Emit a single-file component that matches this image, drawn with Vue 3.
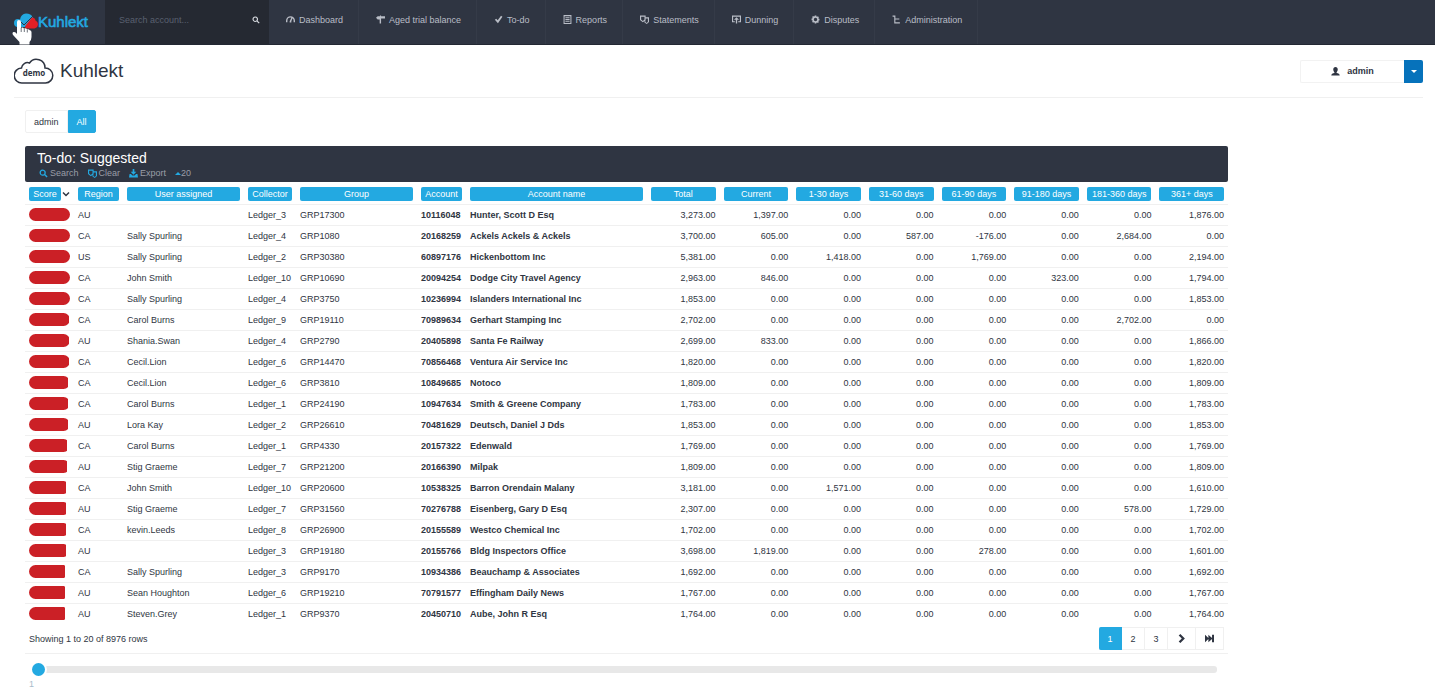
<template>
  <div class="page">
    <!-- 顶部导航 -->
    <header class="topbar">
      <a href="#" class="logo" aria-label="Kuhlekt">
        <svg class="logo-mark" viewBox="0 0 24 18" aria-hidden="true">
          <path d="M4 14a4 4 0 0 1 0-8q1 0 2 .5Q7 1 12 .5q5 0 7 4L11 14z" fill="#23a9e1" />
          <path d="M12 15.500q-1.500-1-.5-3L18 4.500q3 0 3.500 3 2.500 1 2.500 3.500 0 3.500-3.500 4.500z" fill="#e11f26" />
          <path d="M5 7l5 5L19 3" fill="none" stroke="#2f3542" stroke-width="1" />
        </svg>
        <span class="logo-text">Kuhlekt</span>
      </a>
      <form class="account-search" @submit.prevent>
        <input v-model="keyword" type="text" placeholder="Search account..." aria-label="Search account">
        <button type="submit" aria-label="Search">
          <svg class="icon" viewBox="0 0 16 16"><path :d="icons.search" /></svg>
        </button>
      </form>
      <nav class="menu">
        <a v-for="item in menu" :key="item.label" href="#" class="menu-item">
          <svg class="icon" viewBox="0 0 16 16"><path :d="icons[item.icon]" fill-rule="evenodd" /></svg>
          <span>{{ item.label }}</span>
        </a>
      </nav>
      <svg class="pointer" viewBox="0 0 20 25" aria-hidden="true">
        <path d="M5 2q0-2 2-2t2 2v6q1.500-1 3 .5 2-.8 3 .8 2-.6 2.800 1 1.700.2 1.700 2V17q0 3-2 5v2.500H7.500V22L1.500 15.500Q-.5 13 1.500 12 3.500 11.500 5 14z" fill="#fff" />
        <path d="M9.200 8v4M12.300 8.500V12M15.300 9.500v3" fill="none" stroke="#4a505c" stroke-width=".8" />
      </svg>
    </header>

    <!-- 标题与用户 -->
    <section class="heading">
      <svg class="cloud" viewBox="0 0 40 26" aria-hidden="true">
        <path d="M8 25a7.500 7.500 0 0 1-.5-15 6 6 0 0 1 8-5A8.500 8.500 0 0 1 31 10a7.500 7.500 0 0 1 .5 15z" fill="#fff" stroke="#2f3542" stroke-width="1.500" />
        <text x="20" y="18" text-anchor="middle" class="cloud-text">demo</text>
      </svg>
      <h1>Kuhlekt</h1>
      <div class="user">
        <button type="button" class="user-name">
          <svg class="icon" viewBox="0 0 16 16"><path :d="icons.user" /></svg>
          <span>admin</span>
        </button>
        <button type="button" class="user-toggle" aria-label="Open user menu"><i class="caret"></i></button>
      </div>
    </section>

    <main class="content">
      <div class="tabs">
        <button type="button" :class="{ active: tab === 'admin' }" @click="tab = 'admin'">admin</button>
        <button type="button" :class="{ active: tab === 'All' }" @click="tab = 'All'">All</button>
      </div>

      <div class="panel">
        <div class="panel-head">
          <h2>To-do: Suggested</h2>
          <div class="tools">
            <a v-for="tool in tools" :key="tool.label" href="#">
              <svg class="icon" viewBox="0 0 16 16"><path :d="icons[tool.icon]" fill-rule="evenodd" /></svg>
              <span>{{ tool.label }}</span>
            </a>
            <a href="#" class="limit"><i class="caret-up"></i><span>20</span></a>
          </div>
        </div>

        <table>
          <colgroup>
            <col v-for="col in columns" :key="col.title" :class="col.size">
          </colgroup>
          <thead>
            <tr>
              <th v-for="col in columns" :key="col.title" scope="col">
                <div class="th-inner">
                  <button type="button">{{ col.title }}</button>
                  <svg v-if="col.title === 'Score'" class="sort" viewBox="0 0 8 8"><path d="M1 2.500 4 5.500 7 2.500" /></svg>
                </div>
              </th>
            </tr>
          </thead>
          <tbody>
            <tr v-for="row in rows" :key="row[5]">
              <td><div class="score"><div class="score-bar" :style="{ width: row[0] + '%' }"></div></div></td>
              <td v-for="n in 4" :key="n">{{ row[n] }}</td>
              <td class="bold">{{ row[5] }}</td>
              <td class="bold">{{ row[6] }}</td>
              <td v-for="(amount, i) in row[7]" :key="'a' + i" class="num">{{ amount }}</td>
            </tr>
          </tbody>
        </table>

        <div class="table-foot">
          <span>Showing 1 to 20 of 8976 rows</span>
          <div class="pager">
            <button v-for="n in 3" :key="n" type="button" :class="{ active: page === n }" @click="page = n">{{ n }}</button>
            <button type="button" class="wide" aria-label="Next page" @click="page = Math.min(page + 1, 449)">
              <svg class="icon" viewBox="0 0 16 16"><path :d="icons.next" /></svg>
            </button>
            <button type="button" class="wide" aria-label="Last page" @click="page = 449">
              <svg class="icon" viewBox="0 0 16 16"><path :d="icons.last" /></svg>
            </button>
          </div>
        </div>

        <div class="slider">
          <input id="page-slider" v-model.number="page" type="range" min="1" max="449" aria-label="Page">
          <label for="page-slider">{{ page }}</label>
        </div>
      </div>
    </main>
  </div>
</template>

<script setup>
import { ref } from 'vue';

const keyword = ref('');
const tab = ref('All');
const page = ref(1);

// 图标路径
const icons = {
  search: 'M6.500 1a5.500 5.500 0 1 0 3 10.100l4 4 1.800-1.800-4-4A5.500 5.500 0 0 0 6.500 1zm0 2.200a3.300 3.300 0 1 1 0 6.600 3.300 3.300 0 0 1 0-6.600z',
  gauge: 'M8 2a8 8 0 0 0-8 8v3h2.500v-3A5.500 5.500 0 0 1 8 4.500l1.500.2L6.500 11v2.500h3V11l2-5.300A5.500 5.500 0 0 1 13.500 10v3H16v-3a8 8 0 0 0-8-8z',
  sign: 'M0 5l3-3h4V1h2v1h7v4H9v9H6.500V8H3z',
  check: 'M1.500 8.500 4 6.500l2.500 3L12.500 1.500 15 3 7 14.500z',
  list: 'M1 0h14v16H1zM2.800 2v12h10.400V2zM4.300 3.800h7.400v1.900H4.300zM4.300 7h7.400v1.900H4.300zM4.300 10.300h7.400v1.900H4.300z',
  copy: 'M0 1h10v3h6v8.500L12 16l-4-2.500v-3L5 13 0 9zM2 3v5l3 2.500L8 8V3zM10 6v3l-.5.8v2.700L12 14l2-2V6z',
  inbox: 'M0 1h16v12h-5v-2h3V3H2v8h3v2H0zM8 4l4.500 4.500H9.200V15H6.800V8.500H3.500z',
  gear: 'M6.500 1h3v1.500l1.500.7 1.300-1 1.800 1.800-1 1.300.6 1.400H15v3h-1.300l-.6 1.400 1 1.300-1.800 1.800-1.300-1-1.500.7V15h-3v-1.600l-1.500-.6-1.300 1-1.800-1.800 1-1.300-.6-1.400H1v-3h1.300l.6-1.400-1-1.300 1.800-1.800 1.300 1 1.500-.7zM8 5a3 3 0 1 0 0 6 3 3 0 0 0 0-6z',
  tree: 'M1 1h5v2v3h7v2H6v5h8v2H4V3H1z',
  user: 'M8 0c2.500 0 4 1.800 4 4.500 0 2-1 3.800-2 4.700v1.300c3 .7 5.500 1.800 5.500 4.500H.500c0-2.700 2.500-3.800 5.500-4.500V9.200C5 8.300 4 6.500 4 4.500 4 1.800 5.500 0 8 0z',
  download: 'M6.500 0h3v5H13L8 10 3 5h3.500zM1 9h2.500L6 11.500h4L12.500 9H15l1 6H0z',
  next: 'M3 2.500 6 0l8 8-8 8L3 13.500 8.500 8z',
  last: 'M0 1.500 6 7V1.500L12.500 7V1.500H16v13h-3.500V9L6 14.500V9l-6 5.500z',
};

const menu = [
  { label: 'Dashboard', icon: 'gauge' },
  { label: 'Aged trial balance', icon: 'sign' },
  { label: 'To-do', icon: 'check' },
  { label: 'Reports', icon: 'list' },
  { label: 'Statements', icon: 'copy' },
  { label: 'Dunning', icon: 'inbox' },
  { label: 'Disputes', icon: 'gear' },
  { label: 'Administration', icon: 'tree' },
];

const tools = [
  { label: 'Search', icon: 'search' },
  { label: 'Clear', icon: 'copy' },
  { label: 'Export', icon: 'download' },
];

const columns = [
  { title: 'Score', size: 'col-s' },
  { title: 'Region', size: 'col-s' },
  { title: 'User assigned', size: 'col-l' },
  { title: 'Collector', size: 'col-m' },
  { title: 'Group', size: 'col-l' },
  { title: 'Account', size: 'col-s' },
  { title: 'Account name', size: 'col-xl' },
  { title: 'Total', size: 'col-n' },
  { title: 'Current', size: 'col-n' },
  { title: '1-30 days', size: 'col-n' },
  { title: '31-60 days', size: 'col-n' },
  { title: '61-90 days', size: 'col-n' },
  { title: '91-180 days', size: 'col-n' },
  { title: '181-360 days', size: 'col-n' },
  { title: '361+ days', size: 'col-n' },
];

// 分数, 地区, 负责人, 催收员, 分组, 账号, 名称, 金额
const rows = [
  [100, 'AU', '', 'Ledger_3', 'GRP17300', '10116048', 'Hunter, Scott D Esq', ['3,273.00', '1,397.00', '0.00', '0.00', '0.00', '0.00', '0.00', '1,876.00']],
  [100, 'CA', 'Sally Spurling', 'Ledger_4', 'GRP1080', '20168259', 'Ackels Ackels & Ackels', ['3,700.00', '605.00', '0.00', '587.00', '-176.00', '0.00', '2,684.00', '0.00']],
  [100, 'US', 'Sally Spurling', 'Ledger_2', 'GRP30380', '60897176', 'Hickenbottom Inc', ['5,381.00', '0.00', '1,418.00', '0.00', '1,769.00', '0.00', '0.00', '2,194.00']],
  [99, 'CA', 'John Smith', 'Ledger_10', 'GRP10690', '20094254', 'Dodge City Travel Agency', ['2,963.00', '846.00', '0.00', '0.00', '0.00', '323.00', '0.00', '1,794.00']],
  [99, 'CA', 'Sally Spurling', 'Ledger_4', 'GRP3750', '10236994', 'Islanders International Inc', ['1,853.00', '0.00', '0.00', '0.00', '0.00', '0.00', '0.00', '1,853.00']],
  [98, 'CA', 'Carol Burns', 'Ledger_9', 'GRP19110', '70989634', 'Gerhart Stamping Inc', ['2,702.00', '0.00', '0.00', '0.00', '0.00', '0.00', '2,702.00', '0.00']],
  [98, 'AU', 'Shania.Swan', 'Ledger_4', 'GRP2790', '20405898', 'Santa Fe Railway', ['2,699.00', '833.00', '0.00', '0.00', '0.00', '0.00', '0.00', '1,866.00']],
  [97, 'CA', 'Cecil.Lion', 'Ledger_6', 'GRP14470', '70856468', 'Ventura Air Service Inc', ['1,820.00', '0.00', '0.00', '0.00', '0.00', '0.00', '0.00', '1,820.00']],
  [96, 'CA', 'Cecil.Lion', 'Ledger_6', 'GRP3810', '10849685', 'Notoco', ['1,809.00', '0.00', '0.00', '0.00', '0.00', '0.00', '0.00', '1,809.00']],
  [95, 'CA', 'Carol Burns', 'Ledger_1', 'GRP24190', '10947634', 'Smith & Greene Company', ['1,783.00', '0.00', '0.00', '0.00', '0.00', '0.00', '0.00', '1,783.00']],
  [94, 'AU', 'Lora Kay', 'Ledger_2', 'GRP26610', '70481629', 'Deutsch, Daniel J Dds', ['1,853.00', '0.00', '0.00', '0.00', '0.00', '0.00', '0.00', '1,853.00']],
  [93, 'CA', 'Carol Burns', 'Ledger_1', 'GRP4330', '20157322', 'Edenwald', ['1,769.00', '0.00', '0.00', '0.00', '0.00', '0.00', '0.00', '1,769.00']],
  [92, 'AU', 'Stig Graeme', 'Ledger_7', 'GRP21200', '20166390', 'Milpak', ['1,809.00', '0.00', '0.00', '0.00', '0.00', '0.00', '0.00', '1,809.00']],
  [91, 'CA', 'John Smith', 'Ledger_10', 'GRP20600', '10538325', 'Barron Orendain Malany', ['3,181.00', '0.00', '1,571.00', '0.00', '0.00', '0.00', '0.00', '1,610.00']],
  [91, 'AU', 'Stig Graeme', 'Ledger_7', 'GRP31560', '70276788', 'Eisenberg, Gary D Esq', ['2,307.00', '0.00', '0.00', '0.00', '0.00', '0.00', '578.00', '1,729.00']],
  [90, 'CA', 'kevin.Leeds', 'Ledger_8', 'GRP26900', '20155589', 'Westco Chemical Inc', ['1,702.00', '0.00', '0.00', '0.00', '0.00', '0.00', '0.00', '1,702.00']],
  [90, 'AU', '', 'Ledger_3', 'GRP19180', '20155766', 'Bldg Inspectors Office', ['3,698.00', '1,819.00', '0.00', '0.00', '278.00', '0.00', '0.00', '1,601.00']],
  [89, 'CA', 'Sally Spurling', 'Ledger_3', 'GRP9170', '10934386', 'Beauchamp & Associates', ['1,692.00', '0.00', '0.00', '0.00', '0.00', '0.00', '0.00', '1,692.00']],
  [89, 'AU', 'Sean Houghton', 'Ledger_6', 'GRP19210', '70791577', 'Effingham Daily News', ['1,767.00', '0.00', '0.00', '0.00', '0.00', '0.00', '0.00', '1,767.00']],
  [89, 'AU', 'Steven.Grey', 'Ledger_1', 'GRP9370', '20450710', 'Aube, John R Esq', ['1,764.00', '0.00', '0.00', '0.00', '0.00', '0.00', '0.00', '1,764.00']],
];
</script>

<style>
body {
  background: #fff;
}
</style>

<style scoped>
.page {
  font-family: "Liberation Sans", Arial, sans-serif;
  font-size: 9px;
  line-height: 12px;
  color: #2f3542;
}

.page * {
  box-sizing: border-box;
}

a {
  color: inherit;
  text-decoration: none;
}

button,
input {
  font: inherit;
  color: inherit;
  border: 0;
  margin: 0;
  padding: 0;
  background: none;
}

button {
  cursor: pointer;
}

.icon {
  width: 9px;
  height: 9px;
  fill: currentColor;
  flex: none;
}

/* 顶部导航 */
.topbar {
  position: relative;
  display: flex;
  height: 45px;
  background: #2f3542;
  border-bottom: 1px solid #232833;
  color: #b9bdc6;
}

.logo {
  display: flex;
  align-items: center;
  width: 105px;
  padding-left: 14px;
}

.logo-mark {
  width: 24px;
  height: 18px;
}

.logo-text {
  font-size: 15px;
  line-height: 18px;
  color: #23a9e1;
  -webkit-text-stroke: 0.6px #23a9e1;
}

.account-search {
  display: flex;
  align-items: center;
  width: 164px;
  padding: 0 9px 4px 14px;
  background: #252932;
}

.account-search input {
  flex: 1;
  min-width: 0;
  height: 20px;
  outline: none;
}

.account-search input::placeholder {
  color: #596070;
  opacity: 1;
}

.account-search button {
  display: flex;
  color: #d5d8de;
}

.account-search .icon {
  width: 8px;
  height: 8px;
}

.menu {
  display: flex;
}

.menu-item {
  display: flex;
  align-items: center;
  gap: 4px;
  padding: 0 15px 5px 17px;
  border-right: 1px solid #353b48;
  white-space: nowrap;
}

.pointer {
  position: absolute;
  left: 12px;
  top: 20px;
  width: 20px;
  height: 25px;
}

/* 标题与用户 */
.heading {
  display: flex;
  align-items: center;
  height: 53px;
  margin: 0 12px 0 14px;
  border-bottom: 1px solid #f0f0f0;
}

.cloud {
  width: 40px;
  height: 26px;
}

.cloud-text {
  font: bold 8px "Open Sans", sans-serif;
  fill: #2f3542;
}

h1 {
  margin: 0 0 0 6px;
  font-size: 19px;
  line-height: 24px;
  font-weight: normal;
}

.user {
  display: flex;
  height: 23px;
  margin-left: auto;
}

.user-name {
  display: flex;
  align-items: center;
  justify-content: center;
  gap: 7px;
  width: 104px;
  border: 1px solid #f2f2f2;
  border-right: 0;
  border-radius: 2px 0 0 2px;
  font-weight: bold;
}

.user-toggle {
  display: flex;
  align-items: center;
  justify-content: center;
  width: 19px;
  background: #0672bb;
  border-radius: 0 2px 2px 0;
}

.caret {
  border: 3px solid transparent;
  border-top-color: #fff;
  border-bottom: 0;
}

/* 主要内容 */
.content {
  padding: 12px 11px 0 25px;
}

.tabs {
  display: flex;
  height: 23px;
  margin-bottom: 13px;
}

.tabs button {
  padding: 0 8px;
  border: 1px solid #f0f0f0;
  border-radius: 2px 0 0 2px;
}

.tabs button + button {
  border-radius: 0 2px 2px 0;
}

.tabs button.active {
  background: #23a9e1;
  border-color: #23a9e1;
  color: #fff;
}

.panel {
  width: 86%;
}

.panel-head {
  height: 36px;
  padding: 3px 12px 0;
  background: #2f3542;
  border-radius: 2px;
}

h2 {
  margin: 0;
  font-size: 14px;
  line-height: 18px;
  font-weight: normal;
  color: #fff;
}

.tools {
  display: flex;
  gap: 9px;
  padding-left: 2px;
  color: #9a9ea7;
}

.tools a {
  display: flex;
  align-items: center;
  gap: 2px;
}

.tools .icon {
  color: #23a9e1;
}

.tools .limit {
  gap: 0;
}

.caret-up {
  border: 3px solid transparent;
  border-bottom-color: #23a9e1;
  border-top: 0;
}

/* 表格 */
table {
  width: 100%;
  table-layout: fixed;
  border-collapse: collapse;
}

.col-s { width: 49px; }
.col-m { width: 52px; }
.col-l { width: 121px; }
.col-xl { width: 181px; }
.col-n { width: auto; }

th {
  height: 22px;
  padding: 2px 4px 0;
  font-weight: normal;
}

.th-inner {
  display: flex;
  align-items: center;
}

.th-inner button {
  flex: 1;
  height: 14px;
  background: #23a9e1;
  border-radius: 2px;
  color: #fff;
  white-space: nowrap;
}

.sort {
  flex: none;
  width: 8px;
  height: 8px;
  margin-left: 1px;
  fill: none;
  stroke: #2f3542;
  stroke-width: 1.5;
}

td {
  height: 21px;
  padding: 0 4px;
  border-top: 1px solid #f0f0f0;
  white-space: nowrap;
}

.bold {
  font-weight: bold;
}

.num {
  text-align: right;
}

.score {
  height: 13px;
  overflow: hidden;
  border-radius: 7px;
}

.score-bar {
  height: 100%;
  background: #cb2026;
  border-radius: 1px;
}

/* 分页 */
.table-foot {
  display: flex;
  align-items: center;
  justify-content: space-between;
  padding: 3px 4px;
  border-bottom: 1px solid #f0f0f0;
}

.pager {
  display: flex;
}

.pager button {
  display: flex;
  align-items: center;
  justify-content: center;
  width: 23px;
  height: 23px;
  border: 1px solid #f0f0f0;
  border-left: 0;
}

.pager .wide {
  width: 28px;
}

.pager button.active {
  background: #23a9e1;
  border-color: #23a9e1;
  border-radius: 2px 0 0 2px;
  color: #fff;
}

/* 滑块 */
.slider {
  padding: 9px 11px 0 7px;
}

.slider input {
  display: block;
  width: 100%;
  height: 13px;
  appearance: none;
}

.slider input::-webkit-slider-runnable-track {
  height: 7px;
  background: #e8e8e8;
  border-radius: 3px;
}

.slider input::-webkit-slider-thumb {
  appearance: none;
  width: 13px;
  height: 13px;
  margin-top: -3px;
  background: #23a9e1;
  border-radius: 50%;
  box-shadow: 0 0 0 2px #fff;
}

.slider label {
  display: block;
  margin: 2px 0 0 -3px;
  color: #a9bccb;
}
</style>
